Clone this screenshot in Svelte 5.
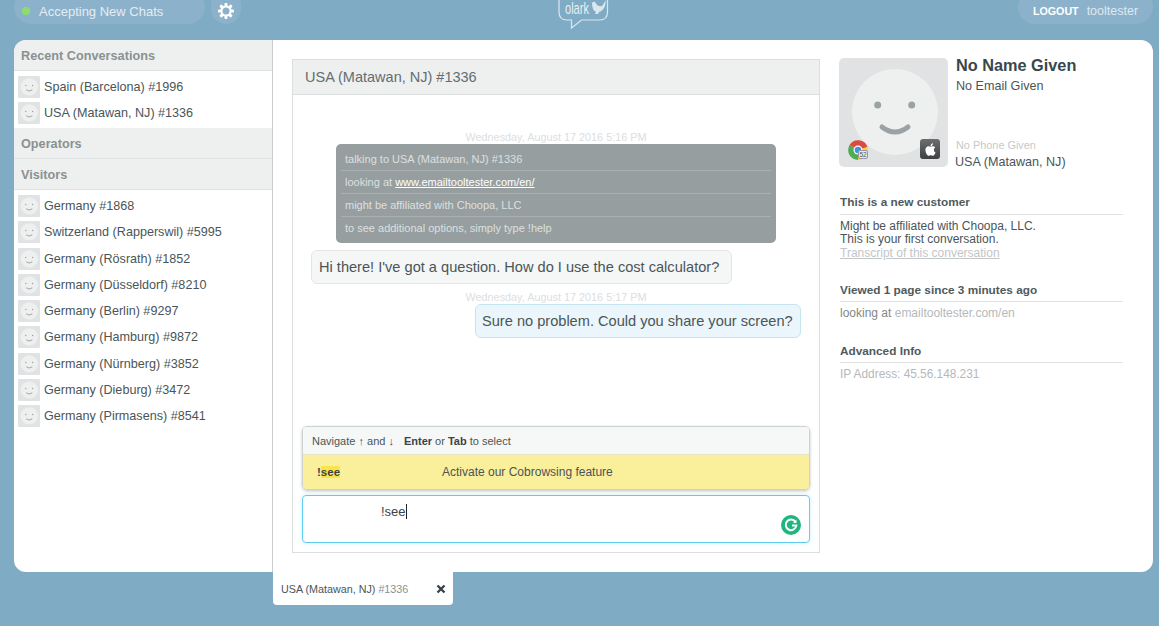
<script>
  const recent = ['Spain (Barcelona) #1996', 'USA (Matawan, NJ) #1336']
  const visitors = [
    'Germany #1868',
    'Switzerland (Rapperswil) #5995',
    'Germany (Rösrath) #1852',
    'Germany (Düsseldorf) #8210',
    'Germany (Berlin) #9297',
    'Germany (Hamburg) #9872',
    'Germany (Nürnberg) #3852',
    'Germany (Dieburg) #3472',
    'Germany (Pirmasens) #8541'
  ]
  const apple =
    'M18.71 19.5c-.83 1.24-1.71 2.45-3.05 2.47-1.34.03-1.77-.79-3.29-.79-1.53 0-2 .77-3.27.82-1.31.05-2.3-1.32-3.14-2.53C4.25 17 2.94 12.45 4.7 9.39c.87-1.52 2.43-2.48 4.12-2.51 1.28-.02 2.5.87 3.29.87.78 0 2.26-1.07 3.81-.91.65.03 2.47.26 3.64 1.98-.09.06-2.17 1.28-2.15 3.81.03 3.02 2.65 4.03 2.68 4.04-.03.07-.42 1.44-1.38 2.83M13 3.5c.73-.83 1.94-1.46 2.94-1.5.13 1.17-.34 2.35-1.04 3.19-.69.85-1.83 1.51-2.95 1.42-.15-1.15.41-2.35 1.05-3.11z'
</script>

{#snippet face(size)}
  <svg class="face" width={size} height={size} viewBox="0 0 109 109">
    <rect width="109" height="109" rx="5" fill="#e0e2e3" />
    <circle cx="56" cy="54" r="43" fill="#eef0ef" />
    <circle cx="38.700" cy="47" r="3.500" fill="#9aa3a3" />
    <circle cx="72.700" cy="47" r="3.500" fill="#9aa3a3" />
    <path d="M43 69q13 10 26 0" fill="none" stroke="#9aa3a3" stroke-width="5" stroke-linecap="round" />
  </svg>
{/snippet}

{#snippet person(name)}
  <li>
    {@render face(22)}
    <span>{name}</span>
  </li>
{/snippet}

<header>
  <div class="left">
    <div class="pill status"><i class="dot"></i>Accepting New Chats</div>
    <div class="gear">
      <svg width="16" height="16" viewBox="0 0 16 16">
        <g fill="#fff">
          <rect x="6.500" y="0" width="3" height="16" rx="0.800" />
          <rect x="6.500" y="0" width="3" height="16" rx="0.800" transform="rotate(45 8 8)" />
          <rect x="6.500" y="0" width="3" height="16" rx="0.800" transform="rotate(90 8 8)" />
          <rect x="6.500" y="0" width="3" height="16" rx="0.800" transform="rotate(135 8 8)" />
        </g>
        <circle cx="8" cy="8" r="5.600" fill="#fff" />
        <circle cx="8" cy="8" r="3.500" fill="#8bb2ca" />
      </svg>
    </div>
  </div>
  <svg class="logo" width="52" height="30" viewBox="0 0 52 30">
    <path d="M1 -6V12q0 8 8 8h4.500v8l10-8h18q8 0 8-8V-6" fill="none" stroke="#dbe7ee" stroke-width="1.200" />
    <text x="7" y="14" class="logo-text" textLength="24" lengthAdjust="spacingAndGlyphs">olark</text>
    <path d="M34 3q1.500-2 3-1l2 3q3 2 5 1l4-6-1 6q-2 5-6 6l-1 2h-3l1-2q-4-2-4-9z" fill="#dbe7ee" />
  </svg>
  <div class="right">
    <div class="pill user"><b>LOGOUT</b><span>tooltester</span></div>
  </div>
</header>

<main>
  <aside>
    <h3>Recent Conversations</h3>
    <ul class="recent">
      {#each recent as name}
        {@render person(name)}
      {/each}
    </ul>
    <h3>Operators</h3>
    <h3>Visitors</h3>
    <ul class="visitors">
      {#each visitors as name}
        {@render person(name)}
      {/each}
    </ul>
  </aside>

  <section class="chat">
    <div class="chat-title">USA (Matawan, NJ) #1336</div>
    <div class="chat-body">
      <div class="messages">
        <p class="date">Wednesday, August 17 2016 5:16 PM</p>
        <div class="system">
          <div>talking to USA (Matawan, NJ) #1336</div>
          <div>looking at <u>www.emailtooltester.com/en/</u></div>
          <div>might be affiliated with Choopa, LLC</div>
          <div>to see additional options, simply type !help</div>
        </div>
        <div class="bubble them">Hi there! I've got a question. How do I use the cost calculator?</div>
        <p class="date second">Wednesday, August 17 2016 5:17 PM</p>
        <div class="bubble me">Sure no problem. Could you share your screen?</div>
      </div>
      <div class="composer">
        <div class="suggest">
          <div class="hint">
            <span>Navigate ↑ and ↓</span>
            <span><b>Enter</b> or <b>Tab</b> to select</span>
          </div>
          <div class="option">
            <span class="cmd">!<mark>see</mark></span>
            <span>Activate our Cobrowsing feature</span>
          </div>
        </div>
        <div class="input">
          <span class="typed">!see</span>
          <svg class="grammarly" width="20" height="20" viewBox="0 0 20 20">
            <circle cx="10" cy="10" r="10" fill="#1fb57f" />
            <path d="M14.500 7a5.300 5.300 0 1 0 0.800 3.500H11" fill="none" stroke="#fff" stroke-width="2" />
            <path d="M15.500 4.500v3.500h-3.500" fill="#fff" />
          </svg>
        </div>
      </div>
    </div>
  </section>

  <section class="info">
    <div class="profile">
      <div class="avatar">
        {@render face(109)}
        <svg class="chrome" width="20" height="20" viewBox="0 0 20 20">
          <path d="M10 10L1.500 5A10 10 0 0 1 19.500 7Z" fill="#dd4b3e" />
          <path d="M10 10L19.500 7A10 10 0 0 1 10 20Z" fill="#f7d23e" />
          <path d="M10 10L10 20A10 10 0 0 1 1.500 5Z" fill="#4fae54" />
          <circle cx="10" cy="10" r="4.500" fill="#fff" />
          <circle cx="10" cy="10" r="3.300" fill="#4a8fe8" />
        </svg>
        <span class="version">52</span>
        <span class="os">
          <svg width="15" height="15" viewBox="0 0 24 24"><path d={apple} fill="#fff" /></svg>
        </span>
      </div>
      <div class="who">
        <h2>No Name Given</h2>
        <p class="email">No Email Given</p>
        <p class="phone">No Phone Given</p>
        <p class="place">USA (Matawan, NJ)</p>
      </div>
    </div>

    <h4 class="new">This is a new customer</h4>
    <p>Might be affiliated with Choopa, LLC.</p>
    <p>This is your first conversation.</p>
    <p class="faint transcript"><u>Transcript of this conversation</u></p>

    <h4>Viewed 1 page since 3 minutes ago</h4>
    <p class="grey">looking at <span class="faint">emailtooltester.com/en</span></p>

    <h4>Advanced Info</h4>
    <p class="faint ip">IP Address: 45.56.148.231</p>
  </section>
</main>

<div class="tabs">
  <div class="tab">
    <span>USA (Matawan, NJ) <em>#1336</em></span>
    <svg width="10" height="10" viewBox="0 0 10 10">
      <path d="M1.500 1.500l7 7M8.500 1.500l-7 7" stroke="#3a4448" stroke-width="2.400" />
    </svg>
  </div>
</div>

<style>
  :global(body) {
    background: #7fabc4;
    font-family: 'Liberation Sans', Arial, sans-serif;
    color: #4a5558;
    height: 626px;
    overflow: hidden;
  }

  header {
    display: grid;
    grid-template-columns: 1fr auto 1fr;
    height: 40px;
    padding: 0 6px 0 14px;
    box-sizing: border-box;
    overflow: hidden;
  }

  .left {
    display: flex;
    gap: 6px;
  }

  .right {
    display: flex;
    justify-content: flex-end;
  }

  .pill {
    background: #8bb2ca;
    height: 34px;
    margin-top: -10px;
    border-radius: 17px;
    display: flex;
    align-items: center;
    padding-top: 8px;
    box-sizing: border-box;
    font-size: 13px;
    color: #e3edf3;
  }

  .status {
    width: 191px;
    padding-left: 8px;
  }

  .dot {
    width: 8px;
    height: 8px;
    border-radius: 50%;
    background: #8fdc6e;
    margin-right: 9px;
  }

  .gear {
    width: 30px;
    height: 34px;
    margin-top: -10px;
    border-radius: 15px;
    background: #8bb2ca;
    display: flex;
    align-items: center;
    justify-content: center;
    padding-top: 8px;
    box-sizing: border-box;
  }

  .logo {
    display: block;
  }

  .logo-text {
    font-family: 'Liberation Sans', sans-serif;
    font-size: 17px;
    fill: #e6eff4;
  }

  .user {
    width: 135px;
    justify-content: center;
    gap: 8px;
    color: #dfe9ef;
    font-size: 12.500px;
  }

  .user b {
    font-size: 10.700px;
    color: #fff;
  }

  main {
    display: flex;
    height: 532px;
    margin: 0 6px 0 14px;
    background: #fff;
    border-radius: 12px;
    overflow: hidden;
  }

  aside {
    width: 258px;
    flex: none;
    border-right: 1px solid #c9cdcd;
  }

  h3 {
    margin: 0;
    height: 30px;
    line-height: 32px;
    padding-left: 7px;
    font-size: 12.700px;
    font-weight: bold;
    color: #8a9192;
    background: #eef0ef;
    border-bottom: 1px solid #dfe2e2;
  }

  ul {
    list-style: none;
    margin: 0;
    padding: 0;
  }

  .recent {
    padding: 2.500px 0 2px;
  }

  .visitors {
    padding-top: 3px;
  }

  li {
    display: flex;
    align-items: center;
    gap: 4px;
    height: 26.250px;
    padding-left: 4px;
    font-size: 12.600px;
    color: #4a5558;
    white-space: nowrap;
  }

  .face {
    display: block;
    flex: none;
  }

  .chat {
    width: 528px;
    height: 494px;
    margin: 19px 0 0 19px;
    flex: none;
    box-sizing: border-box;
    border: 1px solid #dcdfdf;
    display: flex;
    flex-direction: column;
  }

  .chat-title {
    height: 35px;
    line-height: 35px;
    flex: none;
    box-sizing: border-box;
    padding-left: 12px;
    background: #eef0ef;
    border-bottom: 1px solid #dcdfdf;
    font-size: 14.500px;
    color: #646d70;
  }

  .chat-body {
    flex: 1;
    display: flex;
    flex-direction: column;
    justify-content: space-between;
    padding: 36px 9px 9px;
  }

  .messages {
    display: flex;
    flex-direction: column;
  }

  .date {
    margin: 0;
    height: 13px;
    line-height: 13px;
    font-size: 10.850px;
    text-align: center;
    color: #dcdedf;
  }

  .date.second {
    margin-top: 6px;
    height: 14px;
    line-height: 14px;
  }

  .system {
    align-self: flex-start;
    width: 440px;
    height: 99px;
    box-sizing: border-box;
    margin-left: 34px;
    background: #969e9f;
    border-radius: 5px;
    padding: 4px 5px 3px;
    font-size: 11px;
    color: #dce0e0;
  }

  .system div {
    height: 22.750px;
    line-height: 22px;
    padding-left: 4px;
    border-top: 1px solid #a9b0b1;
    box-sizing: border-box;
  }

  .system div:first-child {
    border-top: 0;
    height: 22px;
  }

  .system u {
    color: #fff;
  }

  .bubble {
    box-sizing: border-box;
    height: 34px;
    line-height: 32px;
    padding-left: 7px;
    border-radius: 6px;
    font-size: 14.600px;
    color: #4a5558;
    white-space: nowrap;
  }

  .them {
    width: 421px;
    margin: 7px 0 0 9px;
    background: #f5f6f6;
    border: 1px solid #e4e6e6;
  }

  .me {
    width: 326px;
    margin: 0 9px 0 auto;
    padding-left: 6px;
    background: #eaf6fb;
    border: 1px solid #c5e5f1;
  }

  .composer {
    display: flex;
    flex-direction: column;
    gap: 5px;
  }

  .suggest {
    border: 1px solid #cfd2d2;
    border-radius: 5px;
    box-shadow: 0 1px 3px rgba(0, 0, 0, 0.25);
    overflow: hidden;
    font-size: 11px;
    color: #4a5558;
  }

  .hint {
    height: 27px;
    display: flex;
    align-items: center;
    gap: 10px;
    padding-left: 9px;
    background: #f6f7f7;
    border-bottom: 1px solid #e6e3c4;
  }

  .hint b {
    color: #3b4447;
  }

  .option {
    height: 34px;
    display: flex;
    align-items: center;
    background: #faef9b;
    padding-left: 14px;
    font-size: 12px;
  }

  .cmd {
    width: 125px;
    font-size: 11.500px;
    font-weight: bold;
    color: #3b4447;
  }

  mark {
    background: #fbe44a;
    color: #3b4447;
  }

  .input {
    height: 48px;
    box-sizing: border-box;
    border: 1px solid #5fcdee;
    border-radius: 4px;
    box-shadow: 0 0 5px rgba(95, 205, 238, 0.3);
    padding: 8px 0 0 78px;
    position: relative;
    font-size: 13px;
    color: #3b4447;
  }

  .typed {
    border-right: 1px solid #222;
  }

  .grammarly {
    position: absolute;
    right: 8px;
    bottom: 7px;
  }

  .info {
    flex: 1;
    padding: 18px 30px 0 20px;
    font-size: 12px;
    color: #4a5558;
  }

  .profile {
    display: flex;
    gap: 8px;
    height: 136px;
  }

  .avatar {
    position: relative;
    width: 109px;
    height: 109px;
    margin-left: -1px;
    flex: none;
  }

  .chrome {
    position: absolute;
    left: 9px;
    bottom: 7px;
  }

  .version {
    position: absolute;
    left: 19px;
    bottom: 8px;
    width: 8px;
    height: 7px;
    line-height: 7px;
    font-size: 6.500px;
    text-align: center;
    background: #e6e8e8;
    color: #555;
    border: 1px solid #999;
    border-radius: 2px;
  }

  .os {
    position: absolute;
    right: 8px;
    bottom: 8px;
    width: 20px;
    height: 20px;
    border-radius: 3px;
    background: linear-gradient(#6b6f70, #3e4142);
    display: flex;
    align-items: center;
    justify-content: center;
  }

  .who h2 {
    margin: -3px 0 0;
    font-size: 16.300px;
    line-height: 20px;
    color: #39474d;
  }

  .who p {
    margin: 0;
  }

  .who .email {
    font-size: 12.600px;
    line-height: 16px;
    margin-top: 3px;
    color: #4a5558;
  }

  .who .phone {
    font-size: 10.900px;
    line-height: 12px;
    margin-top: 45px;
    color: #c6c9ca;
  }

  .who .place {
    font-size: 12.600px;
    line-height: 16px;
    margin-top: 3px;
    margin-left: -1px;
    color: #4a5558;
  }

  h4 {
    margin: 22px 0 4px;
    height: 19px;
    font-size: 11.800px;
    line-height: 16px;
    border-bottom: 1px solid #e1e3e3;
    color: #4f5a5d;
  }

  h4.new {
    margin: 0 0 5px;
    height: 20px;
  }

  .info > p {
    margin: 0;
    line-height: 13.300px;
  }

  .info > .transcript {
    color: #c2c6c7;
  }

  .info > .ip {
    font-size: 11.850px;
    padding-top: 1px;
  }

  .faint {
    color: #b4b9ba;
  }

  .grey {
    color: #818889;
    padding: 1px 0;
  }

  .tabs {
    display: flex;
    padding-left: 273px;
  }

  .tab {
    width: 180px;
    height: 33px;
    box-sizing: border-box;
    background: #fff;
    border-radius: 0 0 4px 4px;
    display: flex;
    align-items: center;
    justify-content: space-between;
    padding: 0 7px 0 8px;
    font-size: 10.750px;
    color: #4a5558;
  }

  .tab em {
    font-style: normal;
    color: #8a9192;
  }
</style>
